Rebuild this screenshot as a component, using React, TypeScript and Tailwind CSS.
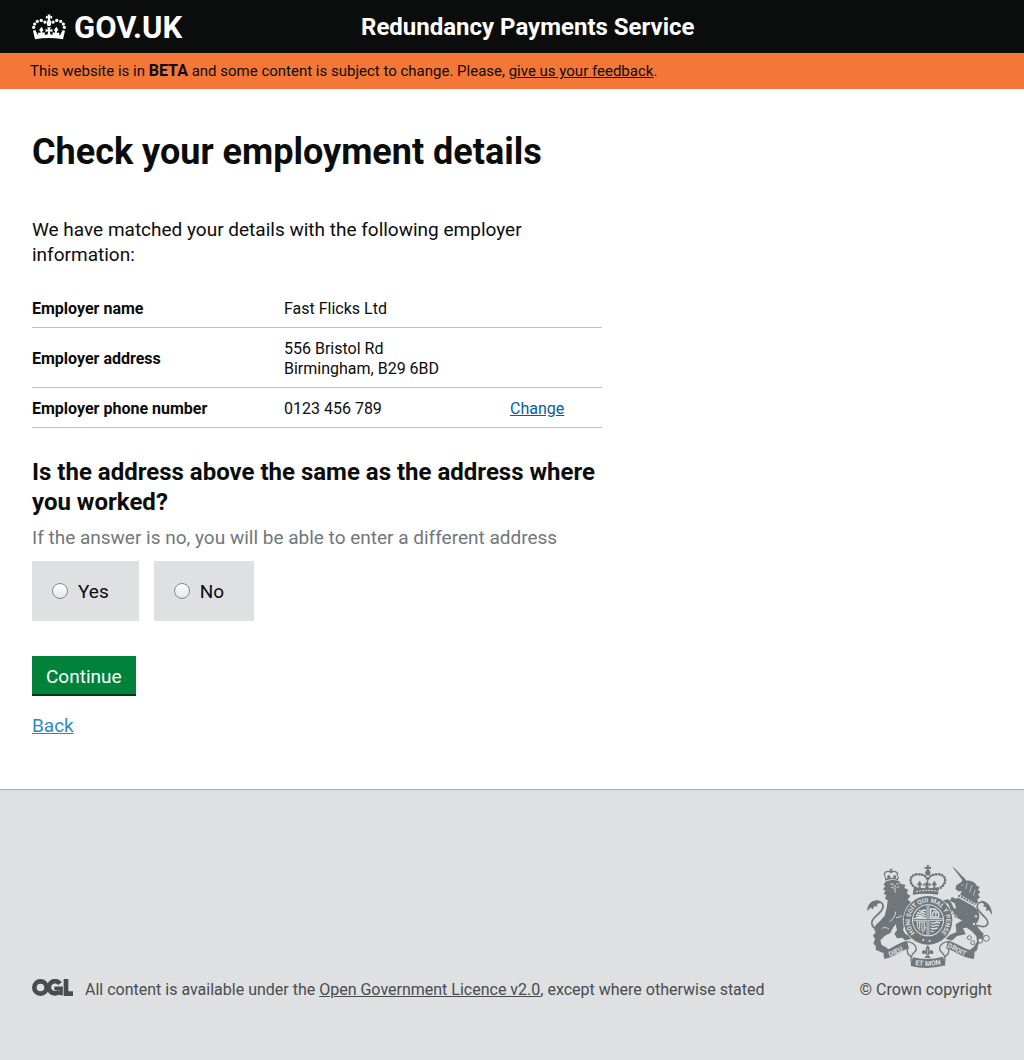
import type { ReactNode } from "react";

function CrownIcon() {
  const beads = [
    [42, 78], [45, 68], [53, 60], [65, 57], [76, 62],
    [135, 78], [132, 68], [124, 60], [112, 57], [101, 62],
  ];
  return (
    <svg viewBox="37 38 103 78" className="h-[26px] w-[34px]" fill="currentColor" aria-hidden="true">
      {beads.map(([x, y]) => (
        <circle key={`${x}-${y}`} cx={x} cy={y} r="5" />
      ))}
      <path d="M84 39h9l-2 6 7-2v9l-7-2 2 8 3 6-3 10h-9l-3-10 3-6 2-8-7 2v-9l7 2z" />
      <path d="M46 114L40 88L47 86L55 102Q88 97 122 102L130 86L137 88L131 114Q88 107 46 114Z" />
      <path d="M66 76l6 11-4 2 1 6 6-3 1 8-8 3h-6l-7-2 1-7 7 1-1-6-4-2zM111 76l6 11-4 2-1 6 7-1 1 7-7 2h-6l-8-3 1-8 6 3 1-6-4-2z" />
      <path d="M83 78h11l-3 7 8-2v9l-8-2 2 11h-9l2-11-8 2v-9l8 2z" />
    </svg>
  );
}

function OglIcon() {
  return (
    <svg viewBox="36 42 123 51" className="h-[17px] w-[41px] shrink-0" role="img" aria-label="OGL">
      <g fill="none" stroke="#494c4e" strokeWidth="14">
        <circle cx="61.500" cy="67.500" r="18.500" />
        <path d="M120 56a18.500 18.500 0 1 0-2 24" />
        <path d="M103 70h20v21" strokeWidth="11" />
        <path d="M138 42v44h21" />
      </g>
    </svg>
  );
}

function CoatOfArms() {
  return (
    <svg
      viewBox="36 30 375 306"
      className="h-[102px] w-[125px] overflow-visible"
      fill="#6f777b"
      fontFamily="Roboto, sans-serif"
      fontWeight="700"
      aria-hidden="true"
    >
      <defs>
        <path id="garter" d="M196 245A54 54 0 1 1 242 245" />
        <path id="dieu" d="M104 305C126 298 142 286 170 274" />
        <path id="etmon" d="M168 328Q218 338 270 326" />
        <path id="droit" d="M276 277C296 284 314 300 352 312" />
      </defs>

      {/* Crown */}
      <path d="M215 30h7l-1 6 7-1v7l-7-1 1 5a8 8 0 1 1-7 0l1-5-7 1v-7l7 1z" />
      <g fill="none" stroke="#6f777b" strokeLinecap="round">
        <path d="M180 98C158 82 164 57 190 58C206 58 216 64 218 78M257 98C279 82 273 57 247 58C231 58 220 64 218 78" strokeWidth="8" strokeDasharray="0 9" />
        <path d="M180 98C158 82 164 57 190 58C206 58 216 64 218 78M257 98C279 82 273 57 247 58C231 58 220 64 218 78" strokeWidth="3" />
      </g>
      <path d="M176 100l8-5 6 4 2-7-6-2 4-7 4-6 4 6 4 7-6 2 2 7 12 1 3-9-8 2v-8l7 1v-6h8v6l7-1v8l-8-2 3 9 12-1 2-7-6-2 4-7 4-6 4 6 4 7-6 2 2 7 6-4 5 5-4 19c-24-4-52-4-76 0z" />
      <path d="M183 110c24-5 48-5 72 0" fill="none" stroke="#dee0e2" strokeWidth="3" strokeDasharray="6 3" />

      {/* Lion */}
      <path d="M91 75l-3-12 4 3 2 5 4-2-2-6 6-3 5 4-2 5 5-1 6 1-2-5 5-4 5 3-2 6 4 2 3-5 4-3-4 13c-11-4-25-4-38 1z" />
      <path d="M90 64C84 50 98 46 108 52C118 46 132 50 126 64M104 45h8M108 41v14" fill="none" stroke="#6f777b" strokeWidth="4" />
      <path d="M91 80L86 89L91 94L84 103L91 107L86 117L94 120L90 131L98 136L95 160L89 182L76 197L62 210L57 222L62 232L54 242L60 252L55 266L63 274L62 284L82 293L103 286L92 276L80 270L76 256L90 242L106 234L114 218L122 208L126 226L118 236L126 250L142 248L150 256L168 252L166 241L152 238L144 226L148 207L142 192L150 190L160 205L174 212L178 202L168 188L158 176L176 167L173 155L160 152L168 142L158 134L166 122L155 114L160 104L148 99L151 89L138 87L132 78C120 73 104 74 91 80Z" />
      <path d="M106 87l10 1M124 87l8-1M118 90l5 8-5 5 5 10M109 97l8 2M127 97l6-2" fill="none" stroke="#dee0e2" strokeWidth="3" />
      <path d="M122 170c0 12-8 22-18 30M141 182c-6 4-12 6-18 6M80 220c8-4 16-2 22 2" fill="none" stroke="#dee0e2" strokeWidth="3" />
      <path d="M82 217C48 228 42 202 62 184C78 170 90 158 82 145C75 137 61 140 51 151" fill="none" stroke="#6f777b" strokeWidth="5" />
      <path d="M36 168C38 146 52 134 70 136L80 143L66 147L67 155L58 153L54 163L47 158Z" />

      {/* Unicorn */}
      <path d="M292 35l7 5 31 32-6 6z" />
      <path d="M320 80L326 67L334 77C350 75 360 82 365 92L374 96L369 104L376 112L369 118L375 128L367 132L369 142L360 150C342 146 322 138 312 124L321 109L310 109L301 102L304 91Z" />
      <path d="M310 125L352 149L368 166C378 184 371 199 363 207L372 222L386 236L382 256L370 268L366 286L350 296L338 290L356 276L366 260L364 244L350 229L336 218L324 219L332 238L306 243L290 257L272 251L284 240L304 231L302 208L322 196C308 192 302 184 296 174L282 170L270 158L276 153L286 158L278 145L262 146L264 136L280 133L290 145L296 160L304 160L298 144L284 137L291 126L304 132Z" />
      <path d="M308 121L360 150" fill="none" stroke="#dee0e2" strokeWidth="11" />
      <path d="M310 121L360 148" fill="none" stroke="#6f777b" strokeWidth="6" strokeDasharray="6 3" />
      <path d="M318 91l7-2M338 84c-6 6-2 12-6 18M352 90c-6 8-4 14-8 22M362 104c-5 4-5 12-6 18" fill="none" stroke="#dee0e2" strokeWidth="2" />
      <path d="M366 211C396 222 408 205 389 186C375 171 361 161 368 148C375 137 389 140 397 151" fill="none" stroke="#6f777b" strokeWidth="5" />
      <path d="M411 180C412 155 396 137 378 137L388 147L384 154L394 157L393 167L402 166Z" />
      <g fill="#dee0e2" stroke="#6f777b" strokeWidth="3">
        <circle cx="292" cy="172" r="5" />
        <circle cx="303" cy="183" r="4" />
        <circle cx="363" cy="184" r="5" />
        <circle cx="357" cy="207" r="5" />
        <circle cx="343" cy="248" r="6" />
        <circle cx="353" cy="263" r="6" />
        <circle cx="376" cy="257" r="7" />
        <circle cx="394" cy="250" r="9" />
      </g>

      {/* Shield and garter */}
      <circle cx="219" cy="196" r="75" fill="#dee0e2" />
      <circle cx="219" cy="196" r="73" />
      <circle cx="219" cy="196" r="48" fill="#dee0e2" />
      <text fontSize="19" fill="#dee0e2" textAnchor="middle">
        <textPath href="#garter" startOffset="50%">HONI SOIT QUI MAL Y PENSE</textPath>
      </text>
      <circle cx="205" cy="255" r="3" fill="#dee0e2" />
      <circle cx="224" cy="258" r="3" fill="#dee0e2" />
      <circle cx="219" cy="196" r="45" />
      <path d="M219 152v88M175 193h88" stroke="#dee0e2" strokeWidth="8" />
      <path d="M219 152v88M175 193h88" stroke="#6f777b" strokeWidth="3" />
      <g fill="none" stroke="#dee0e2" strokeWidth="4">
        <path d="M192 166l8 3 6-4 7 2M186 172l8 4 9-4 9 3M183 180l12 3 7-4 10 3M182 187l10 1 8-2 12 2" />
        <path d="M227 162h12l12 12v12h-24zM233 182v-7l5-6 6 5-3 8" />
        <path d="M227 203l10 2 8-4 10 3M227 211l8 3 9-4 8 3M227 220l10 2 11-3M227 229l9 1" />
        <path d="M184 201h28M187 201v14l8 12M194 202v18M201 202v26M208 202v24M212 216l-10 18" strokeWidth="3" />
      </g>

      {/* Motto scroll */}
      <g fill="none" stroke="#6f777b">
        <path d="M86 300C114 296 128 276 159 269" strokeWidth="24" />
        <path d="M276 269C304 274 318 296 358 300" strokeWidth="24" />
        <path d="M170 320Q218 332 268 318" strokeWidth="27" />
        <path d="M158 260C182 264 190 282 178 292C166 302 166 312 171 328M278 260C254 264 248 282 260 292C272 302 272 312 267 328" strokeWidth="4" />
        <path d="M158 278C154 294 162 302 170 305M280 278C284 294 276 302 268 305" strokeWidth="4" />
      </g>
      <g fill="#dee0e2" fontSize="21">
        <text><textPath href="#dieu">DIEU</textPath></text>
        <text textAnchor="middle"><textPath href="#etmon" startOffset="50%">ET MON</textPath></text>
        <text><textPath href="#droit">DROIT</textPath></text>
      </g>
      <path d="M218 271c8 8 7 15 3 21 4-10 16-8 14 2-2 5-8 4-9 0l-4 5 5 10h-18l5-10-4-5c-1 4-7 5-9 0-2-10 10-12 14-2-4-6-5-13 3-21z" />
      <path d="M218 280v18M209 302h18" fill="none" stroke="#dee0e2" strokeWidth="2" />
    </svg>
  );
}

function DetailRow({ label, children, action }: { label: string; children: ReactNode; action?: ReactNode }) {
  return (
    <tr className="border-b border-[#bfc1c3]">
      <th scope="row" className="w-[252px] pt-[11px] pb-2 text-left align-middle font-bold">{label}</th>
      <td className="w-[226px] pt-[11px] pb-2">{children}</td>
      <td className="pt-[11px] pb-2">{action}</td>
    </tr>
  );
}

function RadioOption({ value, label }: { value: string; label: string }) {
  return (
    <label className="flex h-[60px] cursor-pointer items-center gap-2.5 bg-[#dee0e2] pr-[30px] pl-5 text-[19px] leading-[25px]">
      <input
        type="radio"
        name="same-address"
        value={value}
        className="size-4 appearance-none rounded-full border border-[#85878a] bg-linear-to-b from-white to-[#e6e6e6] checked:border-[5px] checked:border-[#0b0c0c]"
      />
      <span>{label}</span>
    </label>
  );
}

export default function App() {
  return (
    <div className="flex min-h-screen flex-col bg-white font-['Roboto',sans-serif] text-base text-[#0b0c0c]">
      <header className="bg-[#0b0c0c] text-white">
        <div className="mx-8 flex h-[53px] max-w-[960px] items-center">
          <a href="#home" className="flex w-[329px] items-center gap-2 text-[31px] leading-none font-bold">
            <CrownIcon />
            <span className="pt-0.5">GOV.UK</span>
          </a>
          <a href="#service" className="text-2xl leading-[30px] font-bold">Redundancy Payments Service</a>
        </div>
      </header>

      <p className="bg-[#f47738] px-[30px] py-2 text-[15px] leading-5">
        This website is in <strong className="text-base leading-5 font-bold">BETA</strong> and some content is subject to change. Please,{" "}
        <a href="#feedback" className="underline">give us your feedback</a>.
      </p>

      <main className="mx-8 max-w-[960px] grow pt-10 pb-[50px]">
        <div className="max-w-[570px]">
          <h1 className="text-4xl leading-[46px] font-bold">Check your employment details</h1>
          <p className="mt-[42px] text-[19px] leading-[25px]">
            We have matched your details with the following employer information:
          </p>

          <table className="mt-[21px] w-full table-fixed leading-5">
            <tbody>
              <DetailRow label="Employer name">Fast Flicks Ltd</DetailRow>
              <DetailRow label="Employer address">
                556 Bristol Rd
                <br />
                Birmingham, B29 6BD
              </DetailRow>
              <DetailRow
                label="Employer phone number"
                action={<a href="#change" className="text-[#005ea5] underline">Change</a>}
              >
                0123 456 789
              </DetailRow>
            </tbody>
          </table>

          <form onSubmit={(event) => event.preventDefault()}>
            <fieldset className="mt-[29px]">
              <legend>
                <span className="block text-2xl leading-[30px] font-bold">
                  Is the address above the same as the address where you worked?
                </span>
                <span className="mt-2 block text-[19px] leading-[25px] text-[#6f777b]">
                  If the answer is no, you will be able to enter a different address
                </span>
              </legend>
              <div className="mt-[11px] flex gap-[15px]">
                <RadioOption value="yes" label="Yes" />
                <RadioOption value="no" label="No" />
              </div>
            </fieldset>
            <button
              type="submit"
              className="mt-[35px] block h-10 cursor-pointer border-b-2 border-[#003618] bg-[#00823b] px-3.5 pt-0.5 text-[19px] leading-[25px] text-white"
            >
              Continue
            </button>
          </form>

          <p className="mt-[17px] text-[19px] leading-[25px]">
            <a href="#back" className="text-[#2b8cc4] underline">Back</a>
          </p>
        </div>
      </main>

      <footer className="border-t border-[#a1acb2] bg-[#dee0e2] text-[#494c4e]">
        <div className="mx-8 flex max-w-[960px] items-end justify-between pt-[75px] pb-[60px] leading-5">
          <div className="flex items-start gap-3">
            <OglIcon />
            <p className="pt-px">
              All content is available under the{" "}
              <a href="#licence" className="underline">Open Government Licence v2.0</a>, except where otherwise stated
            </p>
          </div>
          <a href="#copyright" className="flex flex-col items-end gap-[13px]">
            <CoatOfArms />
            <span>© Crown copyright</span>
          </a>
        </div>
      </footer>
    </div>
  );
}
